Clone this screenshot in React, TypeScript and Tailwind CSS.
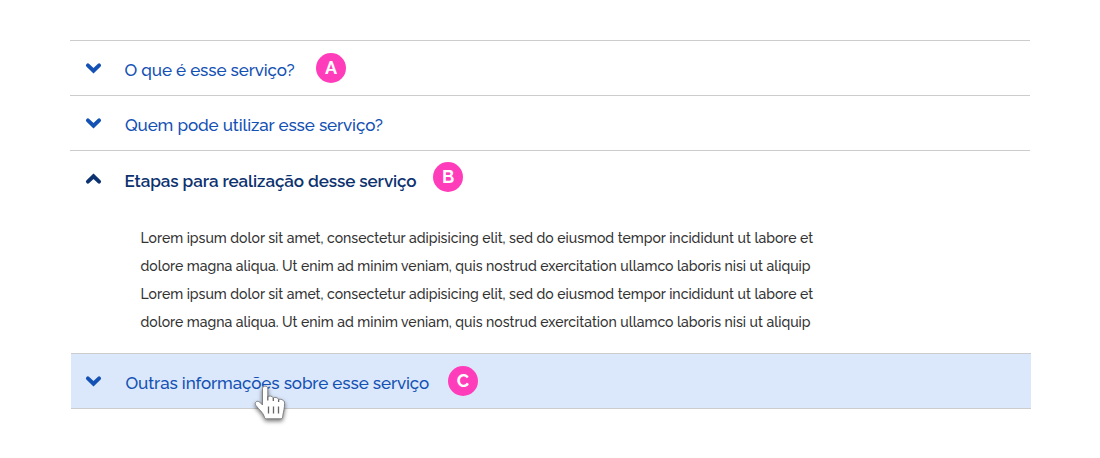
const paragraph = [
  "Lorem ipsum dolor sit amet, consectetur adipisicing elit, sed do eiusmod tempor incididunt ut labore et",
  "dolore magna aliqua. Ut enim ad minim veniam, quis nostrud exercitation ullamco laboris nisi ut aliquip",
];

function Chevron({ up, className }: { up?: boolean; className: string }) {
  return (
    <svg viewBox="0 0 18 18" fill="none" className={`size-[18px] shrink-0 ${className}`}>
      <path
        d={up ? "M2.9 11.7L8.5 6.3L14.1 11.7" : "M2.9 6.3L8.5 11.7L14.1 6.3"}
        stroke="currentColor"
        strokeWidth="3.9"
        strokeLinecap="round"
        strokeLinejoin="miter"
      />
    </svg>
  );
}

function Badge({ label, className }: { label: string; className: string }) {
  return (
    <span
      className={`flex size-[30px] shrink-0 items-center justify-center rounded-full bg-[#ff3dbb] text-[18px] leading-none font-bold text-white ${className}`}
    >
      {label}
    </span>
  );
}

function HandCursor() {
  return (
    <svg
      className="absolute top-[29px] left-[181px] h-[42px] w-[40px] overflow-visible drop-shadow-[0_2px_2px_rgba(0,0,0,0.55)]"
      viewBox="0 0 40 42"
      fill="none"
    >
      <path
        d="M10.5 19V5.8C10.5 2.2 15.8 2.2 15.8 5.8V14C16.5 12.6 20.6 12.7 21.3 15C22.5 13.8 26 14.3 26.6 16.6C28.4 15.7 32.6 16.8 32.6 20.2C32.6 25.5 31.4 29 30.8 32.5C30.6 34.5 30.6 35.8 29 35.8H14.5C13 35.8 12.6 34.8 12.2 33.3C11 29.5 6.8 26.4 3.9 22.4C1.8 19.3 5.2 17 7.8 19.2L10.5 22Z"
        fill="white"
        stroke="#777"
        strokeWidth="0.9"
        strokeLinejoin="round"
      />
      <path
        d="M15.8 13.5V17.5M21.3 15V18M26.6 16.6V19M16.5 23.5V30.5M21.5 23.5V30.5M26.5 23.5V30.5"
        stroke="#666"
        strokeWidth="1.3"
      />
    </svg>
  );
}

export default function App() {
  return (
    <main className="h-[458px] bg-white pt-10 pl-[70px] font-['Raleway','Lato',sans-serif] text-[17px] leading-6 text-[#1351b4]">
      <section className="w-[960px]">
        <div className="flex h-[55px] items-start border-t border-[#ccc] pl-[15px]">
          <Chevron className="mt-[18px]" />
          <span className="mt-[17px] ml-[21.5px] w-[170.5px] font-medium tracking-[-0.11px] whitespace-nowrap">O que é esse serviço?</span>
          <Badge label="A" className="mt-3 ml-[21px]" />
        </div>
        <div className="flex h-[55px] items-start border-t border-[#ccc] pl-[15px]">
          <Chevron className="mt-[18px]" />
          <span className="mt-[17px] ml-[22px] font-medium tracking-[-0.11px] whitespace-nowrap">Quem pode utilizar esse serviço?</span>
        </div>
        <div className="h-[203px] border-t border-[#ccc]">
          <div className="flex items-start pl-[15px] text-[#0c326f]">
            <Chevron up className="mt-[19px]" />
            <span className="mt-[18px] ml-[21.5px] w-[291.5px] font-semibold tracking-[-0.1px] whitespace-nowrap">
              Etapas para realização desse serviço
            </span>
            <Badge label="B" className="mt-[11px] ml-[17px]" />
          </div>
          <div className="mt-[31px] pl-[70.5px] text-[14px] leading-7 font-medium text-[#333]">
            {[0, 1, 2, 3].map((i) => (
              <p key={i} className="whitespace-nowrap">
                {paragraph[i % 2]}
              </p>
            ))}
          </div>
        </div>
        <div className="relative ml-px flex h-14 w-[960px] items-start border-y border-[#ccc] bg-[#dbe8fb] pl-[14px]">
          <Chevron className="mt-[18px]" />
          <span className="mt-[17px] ml-[22.5px] w-[303.5px] font-medium tracking-[-0.11px] whitespace-nowrap">Outras informações sobre esse serviço</span>
          <Badge label="C" className="mt-3 ml-[19px]" />
          <HandCursor />
        </div>
      </section>
    </main>
  );
}
